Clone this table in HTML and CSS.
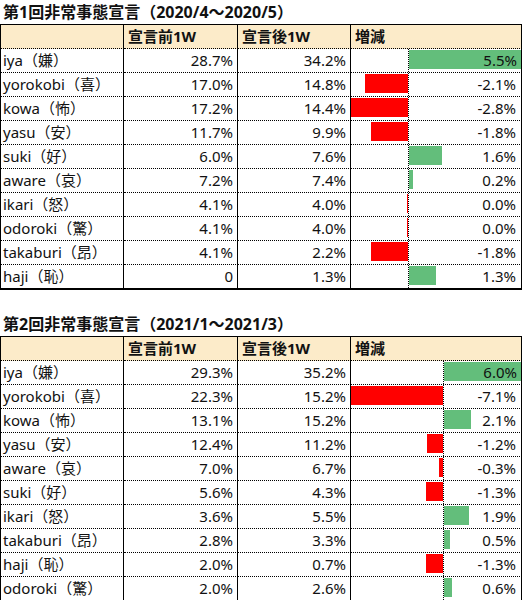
FILE: index.html
```html
<!DOCTYPE html>
<html lang="ja">
<head>
  <meta charset="UTF-8">
  <meta name="viewport" content="width=device-width, initial-scale=1.0">
  <title>非常事態宣言 感情比較</title>
  <link rel="stylesheet" href="styles.css">
</head>
<body>
  <div class="block">
    <div class="title">第1回非常事態宣言（2020/4～2020/5）</div>
    <div class="sheet" id="sheet1"></div>
  </div>
  <div class="block second">
    <div class="title">第2回非常事態宣言（2021/1～2021/3）</div>
    <div class="sheet" id="sheet2"></div>
  </div>

  <script>
    const TRACK = 170; // 増減セルの幅(px)

    // [感情, 宣言前1W, 宣言後1W, 増減表示, 増減値]
    const first = [
      ["iya（嫌）", "28.7%", "34.2%", "5.5%", 5.5],
      ["yorokobi（喜）", "17.0%", "14.8%", "-2.1%", -2.1],
      ["kowa（怖）", "17.2%", "14.4%", "-2.8%", -2.8],
      ["yasu（安）", "11.7%", "9.9%", "-1.8%", -1.8],
      ["suki（好）", "6.0%", "7.6%", "1.6%", 1.6],
      ["aware（哀）", "7.2%", "7.4%", "0.2%", 0.2],
      ["ikari（怒）", "4.1%", "4.0%", "0.0%", -0.05],
      ["odoroki（驚）", "4.1%", "4.0%", "0.0%", -0.05],
      ["takaburi（昂）", "4.1%", "2.2%", "-1.8%", -1.8],
      ["haji（恥）", "0", "1.3%", "1.3%", 1.3]
    ];

    const second = [
      ["iya（嫌）", "29.3%", "35.2%", "6.0%", 6.0],
      ["yorokobi（喜）", "22.3%", "15.2%", "-7.1%", -7.1],
      ["kowa（怖）", "13.1%", "15.2%", "2.1%", 2.1],
      ["yasu（安）", "12.4%", "11.2%", "-1.2%", -1.2],
      ["aware（哀）", "7.0%", "6.7%", "-0.3%", -0.3],
      ["suki（好）", "5.6%", "4.3%", "-1.3%", -1.3],
      ["ikari（怒）", "3.6%", "5.5%", "1.9%", 1.9],
      ["takaburi（昂）", "2.8%", "3.3%", "0.5%", 0.5],
      ["haji（恥）", "2.0%", "0.7%", "-1.3%", -1.3],
      ["odoroki（驚）", "2.0%", "2.6%", "0.6%", 0.6]
    ];

    function cell(cls, text) {
      const div = document.createElement("div");
      div.className = "cell " + cls;
      if (text !== undefined) div.textContent = text;
      return div;
    }

    function renderSheet(el, rows) {
      const negMax = Math.max(...rows.map(r => r[4] < 0 ? -r[4] : 0));
      const posMax = Math.max(...rows.map(r => r[4] > 0 ? r[4] : 0));
      const scale = TRACK / (negMax + posMax);
      const axis = Math.round(negMax * scale);

      // ヘッダー
      el.appendChild(cell("head name", ""));
      el.appendChild(cell("head", "宣言前1W"));
      el.appendChild(cell("head", "宣言後1W"));
      el.appendChild(cell("head", "増減"));

      rows.forEach((r, i) => {
        const last = i === rows.length - 1 ? " last" : "";
        el.appendChild(cell("name" + last, r[0]));
        el.appendChild(cell("num" + last, r[1]));
        el.appendChild(cell("num" + last, r[2]));

        const diff = cell("diff" + last);
        const track = document.createElement("div");
        track.className = "track";

        const neg = document.createElement("div");
        neg.className = "neg";
        neg.style.width = axis + "px";
        const pos = document.createElement("div");
        pos.className = "pos";

        const bar = document.createElement("div");
        bar.className = r[4] < 0 ? "bar down" : "bar up";
        bar.style.width = Math.max(1, Math.round(Math.abs(r[4]) * scale)) + "px";
        (r[4] < 0 ? neg : pos).appendChild(bar);

        track.appendChild(neg);
        track.appendChild(pos);

        const value = document.createElement("div");
        value.className = "value";
        value.textContent = r[3];

        diff.appendChild(track);
        diff.appendChild(value);
        el.appendChild(diff);
      });
    }

    renderSheet(document.getElementById("sheet1"), first);
    renderSheet(document.getElementById("sheet2"), second);
  </script>
</body>
</html>
```

FILE: styles.css
```css
body {
  margin: 0;
  font-family: "Noto Sans", "Noto Sans CJK JP", sans-serif;
  font-size: 15px;
  color: #111;
  background: #fff;
  overflow: hidden;
}
.block {
  width: 522px;
}
.second {
  margin-top: 22px;
}
.title {
  height: 24px;
  line-height: 24px;
  padding-left: 3px;
  font-size: 16px;
  font-weight: bold;
  white-space: nowrap;
}
.sheet {
  display: grid;
  grid-template-columns: 124px 114px 113px 171px;
  border-top: 1px solid #000;
}
.cell {
  box-sizing: border-box;
  height: 24px;
  line-height: 23px;
  padding: 0 4px;
  border-right: 1px solid #000;
  border-bottom: 1px dotted #000;
  white-space: nowrap;
  overflow: hidden;
}
.cell.name {
  border-left: 1px solid #000;
  padding-left: 2px;
}
.cell.num {
  text-align: right;
}
.cell.head {
  background: #fcebc9;
  font-weight: bold;
}
.cell.last {
  height: 25px;
  border-bottom: 2px solid #000;
}
.cell.diff {
  display: grid;
  padding: 0;
}
.track,
.value {
  grid-area: 1 / 1;
}
.track {
  display: flex;
  height: 23px;
}
.neg {
  display: flex;
  justify-content: flex-end;
}
.pos {
  flex: 1;
  border-left: 1px dotted #000;
}
.bar {
  height: 19px;
  margin-top: 1px;
}
.bar.down {
  background: #ff0000;
}
.bar.up {
  background: #63be7b;
}
.value {
  text-align: right;
  padding-right: 5px;
}
```
